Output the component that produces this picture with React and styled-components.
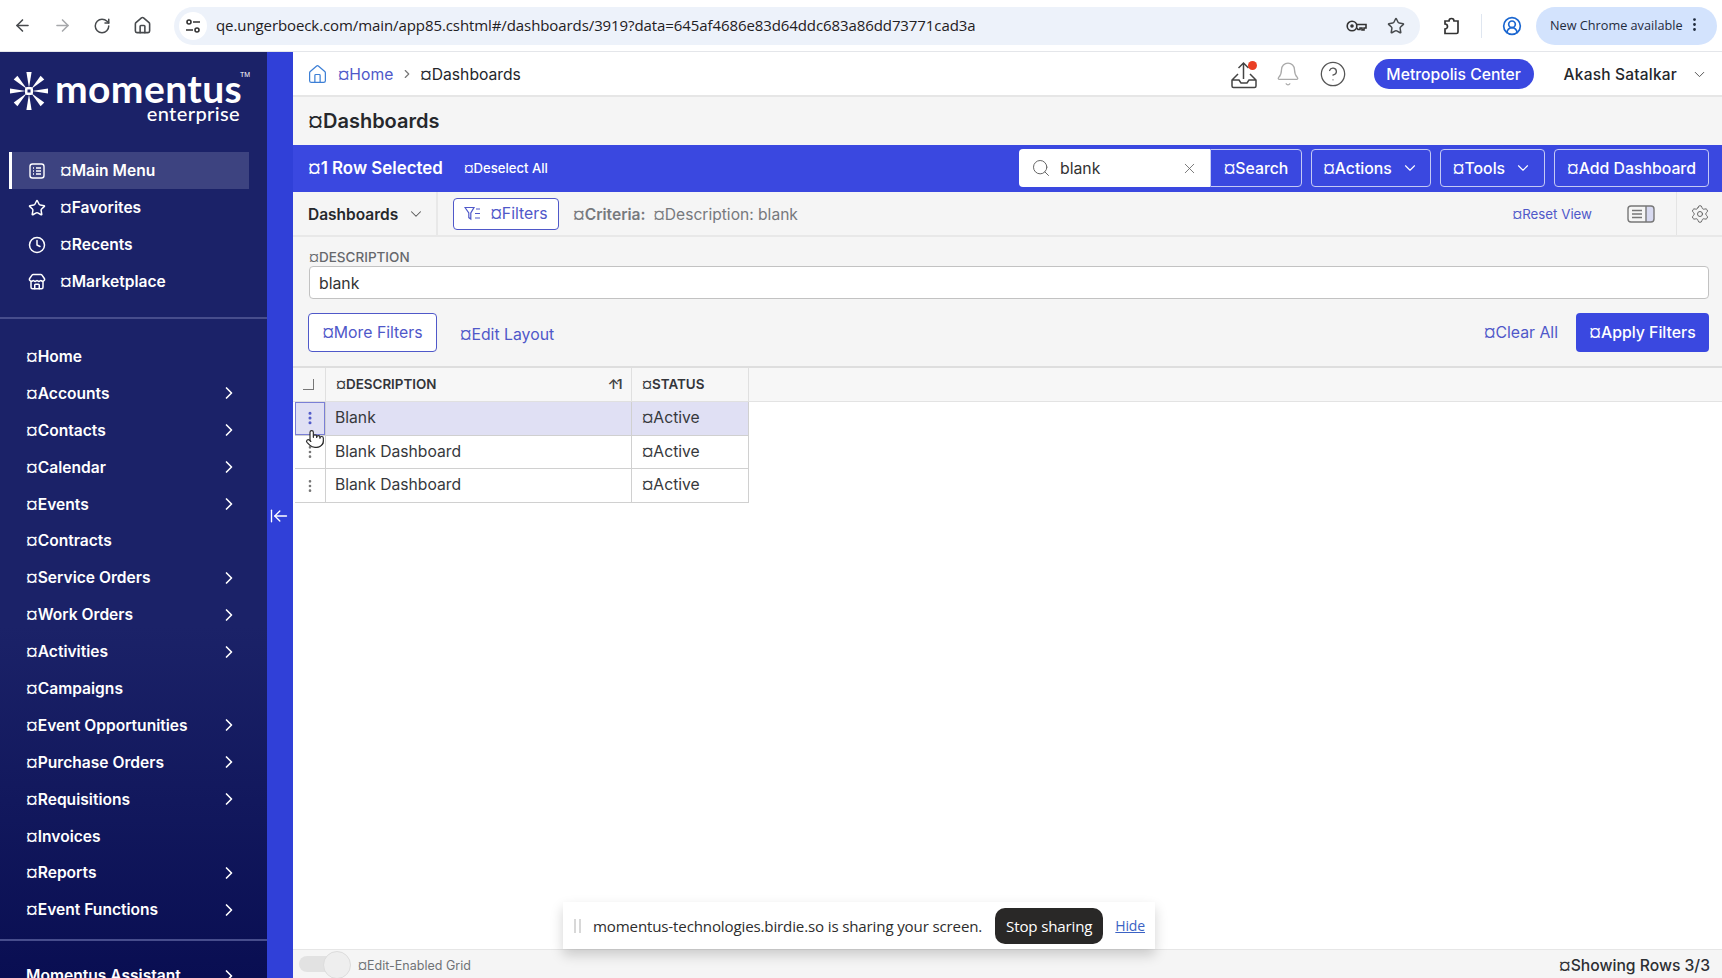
import React from 'react';
import styled, { createGlobalStyle } from 'styled-components';
import {
  ArrowLeft,
  ArrowLeftToLine,
  ArrowRight,
  Bell,
  ChevronDown,
  ChevronRight,
  CircleHelp,
  CircleUserRound,
  Clock,
  EllipsisVertical,
  Home as HomeIcon,
  House,
  Pointer,
  RotateCw,
  Search as SearchIcon,
  Settings,
  Star,
  Store,
  X,
} from 'lucide-react';

const BLUE = '#3a48e0';
const LINK = '#4f58c9';

const GlobalStyle = createGlobalStyle`
  html, body {
    margin: 0;
    height: 100%;
    overflow: hidden;
    font-family: Inter, "Liberation Sans", sans-serif;
    background: #fff;
  }
  * { box-sizing: border-box; }
`;

const Page = styled.div`
  width: 1722px;
  height: 978px;
  display: flex;
  flex-direction: column;
  overflow: hidden;
  position: relative;
`;

/* browser chrome */
const Chrome = styled.div`
  height: 52px;
  flex: none;
  display: flex;
  align-items: center;
  padding: 0 5px 0 2px;
  background: #fff;
  border-bottom: 1px solid #e4e6ea;
`;

const ChromeBtn = styled.div`
  width: 40px;
  height: 40px;
  flex: none;
  display: flex;
  align-items: center;
  justify-content: center;
  color: ${p => p.$color || '#474a4d'};
`;

const Address = styled.div`
  width: 1246px;
  height: 38px;
  margin: 0 12px 0 12px;
  padding: 0 4px 0 5px;
  display: flex;
  align-items: center;
  border-radius: 19px;
  background: #edf2fa;
  color: #1f2023;
`;

const SiteIcon = styled.div`
  width: 28px;
  height: 28px;
  margin-right: 9px;
  border-radius: 50%;
  background: #fff;
  display: flex;
  align-items: center;
  justify-content: center;
`;

const Url = styled.div`
  flex: 1;
  padding-bottom: 2px;
  font: 15px "Open Sans", sans-serif;
  letter-spacing: -0.09px;
  white-space: nowrap;
`;

const UpdatePill = styled.div`
  width: 181px;
  height: 38px;
  margin-left: 4px;
  padding: 0 0 2px 14px;
  display: flex;
  align-items: center;
  gap: 3px;
  border-radius: 19px;
  background: #d3e3fd;
  color: #1f2b3d;
  font: 12.7px "Open Sans", sans-serif;
  white-space: nowrap;
`;

const ChromeDivider = styled.div`
  width: 1px;
  height: 24px;
  margin: 0 10px 0 9px;
  background: #dfe6f0;
`;

const Body = styled.div`
  flex: 1;
  min-height: 0;
  display: flex;
`;

/* left navigation */
const Sidebar = styled.aside`
  width: 267px;
  flex: none;
  height: 100%;
  overflow: hidden;
  background: linear-gradient(180deg, #1b2268 0%, #1b2268 62%, #090e52 100%);
  color: #fff;
`;

const Logo = styled.div`
  height: 100px;
  padding: 20px 0 0 10px;
  display: flex;
  align-items: flex-start;
  gap: 7px;
`;

const LogoWords = styled.div`
  display: flex;
  flex-direction: column;
  align-items: flex-end;
  position: relative;
  padding-right: 8px;
`;

const LogoName = styled.div`
  font: 700 39px/33px Lato, sans-serif;
  letter-spacing: 0.4px;
`;

const LogoSub = styled.div`
  font: 500 20px/17px Lato, sans-serif;
  letter-spacing: 0.4px;
  margin-right: 2px;
`;

const LogoTm = styled.span`
  position: absolute;
  top: -1px;
  right: 0;
  font: 7px "Liberation Sans", sans-serif;
`;

const TopNav = styled.nav`
  padding-bottom: 17px;
  border-bottom: 2px solid #474d8c;
`;

const TopItem = styled.div`
  height: 37px;
  margin-right: 18px;
  margin-left: 9px;
  padding-left: 16px;
  display: flex;
  align-items: center;
  gap: 14px;
  font-size: 15.6px;
  font-weight: 600;
  border-left: 3px solid ${p => (p.$active ? '#fff' : 'transparent')};
  background: ${p => (p.$active ? '#3d4380' : 'transparent')};
`;

const MainNav = styled.nav`
  padding: 19px 0 11px;
  border-bottom: 2px solid #474d8c;
`;

const NavItem = styled.div`
  height: 36.9px;
  padding: 0 28px 0 26px;
  display: flex;
  align-items: center;
  justify-content: space-between;
  font-size: 15.6px;
  font-weight: 600;
  white-space: nowrap;
`;

const AssistantItem = styled(NavItem)`
  margin-top: 16px;
`;

const Strip = styled.div`
  width: 26px;
  flex: none;
  background: #3040d8;
`;

const Collapse = styled.div`
  position: absolute;
  left: 269px;
  top: 506px;
  color: #fff;
  display: flex;
`;

/* main column */
const Main = styled.main`
  flex: 1;
  min-width: 0;
  display: flex;
  flex-direction: column;
  background: #fff;
`;

const Header = styled.header`
  height: 45px;
  flex: none;
  display: flex;
  align-items: center;
  padding: 1px 14px 0;
  border-bottom: 2px solid #e6e6e6;
  font-size: 15.7px;
  color: #24262b;
`;

const Crumb = styled.span`
  display: flex;
  margin-left: ${p => p.$gap || 0}px;
  color: ${p => p.$color || 'inherit'};
  white-space: nowrap;
`;

const HeaderRight = styled.div`
  margin-left: auto;
  display: flex;
  align-items: center;
`;

const HeaderIcon = styled.div`
  position: relative;
  width: 30px;
  height: 30px;
  margin-left: ${p => p.$gap ?? 15}px;
  display: flex;
  align-items: center;
  justify-content: center;
  color: ${p => p.$color || '#444'};
`;

const RedDot = styled.span`
  position: absolute;
  top: 2px;
  right: 2px;
  width: 9px;
  height: 9px;
  border-radius: 50%;
  background: #ea3f25;
`;

const VenuePill = styled.div`
  margin-left: 26px;
  width: 160px;
  height: 30px;
  border-radius: 15px;
  background: ${BLUE};
  color: #fff;
  display: flex;
  align-items: center;
  justify-content: center;
  font-size: 15.7px;
  font-weight: 500;
`;

const UserName = styled.div`
  margin-left: 30px;
  font-size: 15.5px;
  font-weight: 500;
  white-space: nowrap;
  letter-spacing: 0.2px;
`;

const UserChevron = styled.div`
  margin-left: 14px;
  display: flex;
  color: #555;
`;

const TitleBar = styled.div`
  height: 48px;
  flex: none;
  padding: 0 15px;
  display: flex;
  align-items: center;
  background: #f5f5f5;
  font-size: 20px;
  font-weight: 600;
  color: #26282c;
`;

const ActionBar = styled.div`
  height: 47px;
  flex: none;
  padding: 0 13px 1px 15px;
  display: flex;
  align-items: center;
  background: ${BLUE};
  color: #fff;
`;

const SelectedCount = styled.div`
  font-size: 16.9px;
  font-weight: 600;
  white-space: nowrap;
`;

const Deselect = styled.div`
  margin-left: 21px;
  font-size: 13.1px;
  font-weight: 500;
  white-space: nowrap;
`;

const SearchBox = styled.div`
  margin-left: auto;
  width: 191px;
  height: 38px;
  padding: 0 12px;
  display: flex;
  align-items: center;
  border-radius: 4px 0 0 4px;
  background: #fff;
  color: #333;
  font-size: 15.8px;
`;

const SearchText = styled.span`
  flex: 1;
  margin-left: 9px;
`;

const BarButton = styled.div`
  height: 38px;
  width: ${p => p.$w}px;
  margin-left: ${p => p.$gap ?? 9}px;
  display: flex;
  align-items: center;
  justify-content: center;
  gap: 9px;
  border: 1px solid #c4c9f5;
  border-radius: ${p => p.$radius || '4px'};
  font-size: 15.8px;
  font-weight: 500;
  white-space: nowrap;
`;

const ViewBar = styled.div`
  height: 45px;
  flex: none;
  display: flex;
  align-items: center;
  padding-right: 12px;
  background: #f5f5f5;
  border-bottom: 2px solid #e8e8e8;
`;

const ViewSelect = styled.div`
  width: 145px;
  height: 100%;
  padding: 1px 0 0 15px;
  display: flex;
  align-items: center;
  gap: 9px;
  border-right: 2px solid #e8e8e8;
  font-size: 15.5px;
  font-weight: 600;
  color: #26282c;
`;

const OutlineButton = styled.div`
  display: flex;
  align-items: center;
  justify-content: center;
  gap: 9px;
  width: ${p => p.$w}px;
  height: ${p => p.$h}px;
  margin-left: ${p => p.$gap || 0}px;
  background: #fff;
  border: 1px solid ${LINK};
  border-radius: 4px;
  color: ${LINK};
  font-size: 15.8px;
  white-space: nowrap;
`;

const Criteria = styled.div`
  margin: 2px 0 0 14px;
  color: #77797d;
  font-size: 15.6px;
  white-space: nowrap;
`;

const CriteriaLabel = styled.span`
  font-weight: 600;
  margin-right: 8px;
`;

const LinkText = styled.div`
  color: ${LINK};
  font-size: ${p => p.$size || 15.8}px;
  margin-left: ${p => p.$left || 0};
  margin-top: ${p => p.$top || 0}px;
  white-space: nowrap;
`;

const ViewRight = styled.div`
  margin-left: auto;
  height: 100%;
  display: flex;
  align-items: center;
`;

const ViewDivider = styled.div`
  width: 1px;
  height: 100%;
  margin: 0 13px 0 21px;
  background: #e4e4e4;
`;

const FilterPanel = styled.section`
  height: 131px;
  flex: none;
  padding: 12px 13px 0 15px;
  background: #f5f5f5;
  border-bottom: 2px solid #dedede;
`;

const FieldLabel = styled.div`
  margin-left: 1px;
  font-size: 13.5px;
  line-height: 16px;
  font-weight: 500;
  color: #66686c;
`;

const FieldInput = styled.div`
  height: 33px;
  margin: 1px 0 14px 1px;
  padding: 1px 9px 0;
  display: flex;
  align-items: center;
  background: #fff;
  border: 1px solid #c2c2c2;
  border-radius: 4px;
  font-size: 15.8px;
  color: #333;
`;

const FilterActions = styled.div`
  display: flex;
  align-items: center;
`;

const ApplyButton = styled.div`
  width: 133px;
  height: 39px;
  margin-left: 18px;
  display: flex;
  align-items: center;
  justify-content: center;
  border-radius: 4px;
  background: ${BLUE};
  color: #fff;
  font-size: 15.8px;
  font-weight: 500;
  white-space: nowrap;
`;

/* grid */
const GridArea = styled.div`
  flex: 1;
  min-height: 0;
  position: relative;
`;

const HeadStrip = styled.div`
  height: 34px;
  background: #f7f7f7;
  border-bottom: 1px solid #e3e3e3;
`;

const Table = styled.div`
  position: absolute;
  top: 0;
  left: 2px;
  width: 454px;
  display: grid;
  grid-template-columns: 31px 306px 117px;
  grid-template-rows: 34px repeat(3, 33.7px);
`;

const Cell = styled.div`
  display: flex;
  align-items: center;
  justify-content: ${p => (p.$center ? 'center' : 'flex-start')};
  padding: ${p => (p.$center ? '0' : '0 9px 2px')};
  border-right: 1px solid #d0d0d0;
  border-bottom: 1px solid #d0d0d0;
  background: ${p => (p.$selected ? '#e0e0f4' : '#fff')};
  color: #36383c;
  font-size: 15.7px;
  white-space: nowrap;
`;

const StatusCell = styled(Cell)`
  padding-left: 10px;
`;

const HeadCell = styled(Cell)`
  padding-left: ${p => (p.$center ? 0 : 10)}px;
  justify-content: ${p => (p.$center ? 'center' : 'space-between')};
  background: #f7f7f7;
  border-color: #e0e0e0;
  font-size: 13.4px;
  font-weight: 600;
  color: #33353a;
`;

const SelectCorner = styled.div`
  width: 11px;
  height: 11px;
  margin-left: -3px;
  border-right: 1.5px solid #777;
  border-bottom: 1.5px solid #777;
`;

const RowMenu = styled(Cell)`
  color: ${p => (p.$selected ? LINK : '#777')};
  ${p => p.$selected && `box-shadow: inset 0 0 0 1px #7a7fd6;`}
`;

const SortMark = styled.span`
  font-size: 13.5px;
  font-weight: 600;
  letter-spacing: -2.5px;
  color: #444;
  padding-right: 2px;
`;

const Hand = styled.div`
  position: absolute;
  left: 12px;
  top: 61px;
  display: flex;
  color: #2a2a2a;
`;

/* footer */
const Footer = styled.footer`
  height: 29px;
  flex: none;
  padding: 0 12px 0 6px;
  display: flex;
  align-items: center;
  background: #f5f5f5;
  border-top: 1px solid #e6e6e6;
`;

const Toggle = styled.div`
  width: 52px;
  height: 26px;
  flex: none;
  position: relative;
  &::before {
    content: '';
    position: absolute;
    left: 0;
    top: 5px;
    width: 40px;
    height: 16px;
    border-radius: 8px;
    background: #e2e2e2;
  }
  &::after {
    content: '';
    position: absolute;
    right: 0;
    top: 0;
    width: 26px;
    height: 26px;
    border-radius: 50%;
    background: #eee;
    border: 1px solid #dcdcdc;
  }
`;

const ToggleLabel = styled.div`
  margin: 2px 0 0 7px;
  font-size: 12.5px;
  color: #707275;
`;

const RowCount = styled.div`
  margin: 2px 0 0 auto;
  font-size: 15.7px;
  font-weight: 500;
  color: #2d2f33;
`;

/* screen share notice */
const ShareBar = styled.div`
  position: absolute;
  left: 563px;
  top: 902px;
  width: 592px;
  height: 47px;
  padding: 0 10px 0 11px;
  display: flex;
  align-items: center;
  background: #fff;
  box-shadow: 0 6px 12px rgba(0, 0, 0, 0.18);
  font: 15.1px "Open Sans", sans-serif;
  letter-spacing: -0.15px;
  color: #2d2d2d;
  white-space: nowrap;
`;

const Grip = styled.div`
  width: 7px;
  height: 14px;
  margin-right: 12px;
  border-left: 2px solid #d8d8d8;
  border-right: 2px solid #d8d8d8;
`;

const StopButton = styled.div`
  margin-left: 13px;
  width: 109px;
  height: 36px;
  display: flex;
  align-items: center;
  justify-content: center;
  border-radius: 10px;
  background: #292827;
  color: #fff;
`;

const HideLink = styled.div`
  margin-left: 12px;
  color: #3b62c4;
  font-size: 14px;
  text-decoration: underline;
`;

const topItems = [
  { label: 'Main Menu', icon: ListIcon, active: true },
  { label: 'Favorites', icon: Star },
  { label: 'Recents', icon: Clock },
  { label: 'Marketplace', icon: Store },
];

const navItems = [
  ['Home', false],
  ['Accounts', true],
  ['Contacts', true],
  ['Calendar', true],
  ['Events', true],
  ['Contracts', false],
  ['Service Orders', true],
  ['Work Orders', true],
  ['Activities', true],
  ['Campaigns', false],
  ['Event Opportunities', true],
  ['Purchase Orders', true],
  ['Requisitions', true],
  ['Invoices', false],
  ['Reports', true],
  ['Event Functions', true],
];

const rows = [
  { name: 'Blank', selected: true },
  { name: 'Blank Dashboard' },
  { name: 'Blank Dashboard' },
];

function ListIcon(props) {
  return (
    <svg width={props.size} height={props.size} viewBox="0 0 18 18" fill="none" stroke="currentColor" strokeWidth="1.4">
      <rect x="2" y="2" width="14" height="14" rx="2.5" />
      <path d="M5 6h1M8 6h5M5 9h1M8 9h5M5 12h1M8 12h5" />
    </svg>
  );
}

const LogoMark = () => (
  <svg width="38" height="40" viewBox="0 0 38 40" fill="#fff" style={{ marginTop: -1 }}>
    {[0, 45, 90, 135, 180, 225, 270, 315].map(a => (
      <polygon key={a} points="19,17 16.4,1 21.6,1" transform={`rotate(${a} 19 20)`} />
    ))}
    <rect x="15" y="16" width="8" height="8" rx="2" />
    <rect x="17.5" y="18.5" width="3" height="3" fill="#1b2268" />
  </svg>
);

const UploadTray = () => (
  <svg width="28" height="30" viewBox="0 0 28 30" fill="none" stroke="#444" strokeWidth="1.5">
    <path d="M13.5 20V4M8.5 9l5-5 5 5" />
    <path d="M8 15l-6 6v6a1.5 1.5 0 0 0 1.5 1.5h21a1.5 1.5 0 0 0 1.5-1.5v-6l-6-6M2 21h7l2 3h6l2-3h7" />
  </svg>
);

const FilterIcon = () => (
  <svg width="17" height="15" viewBox="0 0 17 15" fill="none" stroke={LINK} strokeWidth="1.2">
    <path d="M1 1.5h9L6.8 7v6l-2-1.4V7zM12 3h4M11 7.5h5M11 12h5" />
  </svg>
);

const PanelIcon = () => (
  <svg width="28" height="18" viewBox="0 0 28 18" fill="none" stroke="#777" strokeWidth="1.4" style={{ marginLeft: 35 }}>
    <path d="M19 1h5.5a2.5 2.5 0 0 1 2.5 2.5v11a2.5 2.5 0 0 1-2.5 2.5H19z" fill="#d8daf0" stroke="none" />
    <rect x="1" y="1" width="26" height="16" rx="3" />
    <path d="M19 1v16M5 5.5h10M5 9h10M5 12.5h10" />
  </svg>
);

const SiteControls = () => (
  <svg width="16" height="16" viewBox="0 0 16 16" fill="none" stroke="#333" strokeWidth="1.6">
    <circle cx="4" cy="4" r="2" />
    <path d="M8 4h7M1 12h7" />
    <circle cx="12" cy="12" r="2" />
  </svg>
);

const KeyIcon = () => (
  <svg width="21" height="14" viewBox="0 0 21 14" fill="none" stroke="#333" strokeWidth="1.6">
    <circle cx="6" cy="7" r="4.8" />
    <circle cx="6" cy="7" r="1" fill="#333" />
    <path d="M10.8 5.5H20V9h-2v2h-2V9h-2v1.5h-2L10.8 9" />
  </svg>
);

const ExtensionIcon = () => (
  <svg width="20" height="20" viewBox="0 0 20 20" fill="none" stroke="#333" strokeWidth="1.7">
    <path d="M3 5h4a2.5 2.5 0 0 1 5 0h4v11a1.5 1.5 0 0 1-1.5 1.5H3v-4.5a2.5 2.5 0 0 0 0-5z" />
  </svg>
);

const App = () => (
  <Page>
    <GlobalStyle />
    <Chrome>
      <ChromeBtn><ArrowLeft size={19} /></ChromeBtn>
      <ChromeBtn $color="#a6a8ab"><ArrowRight size={19} /></ChromeBtn>
      <ChromeBtn><RotateCw size={18} /></ChromeBtn>
      <ChromeBtn><HomeIcon size={19} /></ChromeBtn>
      <Address>
        <SiteIcon><SiteControls /></SiteIcon>
        <Url>qe.ungerboeck.com/main/app85.cshtml#/dashboards/3919?data=645af4686e83d64ddc683a86dd73771cad3a</Url>
        <ChromeBtn><KeyIcon /></ChromeBtn>
        <ChromeBtn><Star size={18} /></ChromeBtn>
      </Address>
      <ChromeBtn><ExtensionIcon /></ChromeBtn>
      <ChromeDivider />
      <ChromeBtn $color="#1a66d0"><CircleUserRound size={20} /></ChromeBtn>
      <UpdatePill>
        New Chrome available
        <EllipsisVertical size={17} />
      </UpdatePill>
    </Chrome>
    <Body>
      <Sidebar>
        <Logo>
          <LogoMark />
          <LogoWords>
            <LogoName>momentus</LogoName>
            <LogoSub>enterprise</LogoSub>
            <LogoTm>TM</LogoTm>
          </LogoWords>
        </Logo>
        <TopNav>
          {topItems.map(({ label, icon: Icon, active }) => (
            <TopItem key={label} $active={active}>
              <Icon size={18} />
              <span>¤{label}</span>
            </TopItem>
          ))}
        </TopNav>
        <MainNav>
          {navItems.map(([label, more]) => (
            <NavItem key={label}>
              <span>¤{label}</span>
              {more && <ChevronRight size={20} />}
            </NavItem>
          ))}
        </MainNav>
        <AssistantItem>
          <span>Momentus Assistant</span>
          <ChevronRight size={20} />
        </AssistantItem>
      </Sidebar>
      <Strip />
      <Collapse><ArrowLeftToLine size={20} strokeWidth={1.6} /></Collapse>
      <Main>
        <Header>
          <House size={21} color="#3c7fd6" strokeWidth={1.4} />
          <Crumb $gap={10} $color={LINK}>¤Home</Crumb>
          <Crumb $gap={7}><ChevronRight size={14} color="#777" /></Crumb>
          <Crumb $gap={6}>¤Dashboards</Crumb>
          <HeaderRight>
            <HeaderIcon><UploadTray /><RedDot /></HeaderIcon>
            <HeaderIcon $color="#aaa" $gap={14}><Bell size={26} strokeWidth={1.2} /></HeaderIcon>
            <HeaderIcon $color="#555"><CircleHelp size={28} strokeWidth={1.1} /></HeaderIcon>
            <VenuePill>Metropolis Center</VenuePill>
            <UserName>Akash Satalkar</UserName>
            <UserChevron><ChevronDown size={17} strokeWidth={1.4} /></UserChevron>
          </HeaderRight>
        </Header>
        <TitleBar>¤Dashboards</TitleBar>
        <ActionBar>
          <SelectedCount>¤1 Row Selected</SelectedCount>
          <Deselect>¤Deselect All</Deselect>
          <SearchBox>
            <SearchIcon size={20} strokeWidth={1.2} color="#666" />
            <SearchText>blank</SearchText>
            <X size={17} strokeWidth={1.2} color="#666" />
          </SearchBox>
          <BarButton $w={92} $gap={0} $radius="0 4px 4px 0">¤Search</BarButton>
          <BarButton $w={120}>¤Actions <ChevronDown size={18} strokeWidth={1.5} /></BarButton>
          <BarButton $w={105}>¤Tools <ChevronDown size={18} strokeWidth={1.5} /></BarButton>
          <BarButton $w={155}>¤Add Dashboard</BarButton>
        </ActionBar>
        <ViewBar>
          <ViewSelect>Dashboards <ChevronDown size={18} strokeWidth={1.4} color="#555" /></ViewSelect>
          <OutlineButton $w={106} $h={32} $gap={15}><FilterIcon />¤Filters</OutlineButton>
          <Criteria><CriteriaLabel>¤Criteria:</CriteriaLabel>¤Description: blank</Criteria>
          <ViewRight>
            <LinkText $size={13.3}>¤Reset View</LinkText>
            <PanelIcon />
            <ViewDivider />
            <Settings size={20} strokeWidth={1.2} color="#666" />
          </ViewRight>
        </ViewBar>
        <FilterPanel>
          <FieldLabel>¤DESCRIPTION</FieldLabel>
          <FieldInput>blank</FieldInput>
          <FilterActions>
            <OutlineButton $w={129} $h={39}>¤More Filters</OutlineButton>
            <LinkText $left="23px" $top={3}>¤Edit Layout</LinkText>
            <LinkText $left="auto">¤Clear All</LinkText>
            <ApplyButton>¤Apply Filters</ApplyButton>
          </FilterActions>
        </FilterPanel>
        <GridArea>
          <HeadStrip />
          <Table>
            <HeadCell $center><SelectCorner /></HeadCell>
            <HeadCell>¤DESCRIPTION<SortMark>↑1</SortMark></HeadCell>
            <HeadCell>¤STATUS</HeadCell>
            {rows.map((row, i) => (
              <React.Fragment key={i}>
                <RowMenu $center $selected={row.selected}>
                  <EllipsisVertical size={16} strokeWidth={row.selected ? 2.6 : 2} />
                </RowMenu>
                <Cell $selected={row.selected}>{row.name}</Cell>
                <StatusCell $selected={row.selected}>¤Active</StatusCell>
              </React.Fragment>
            ))}
          </Table>
          <Hand><Pointer size={20} strokeWidth={1.4} fill="#fff" /></Hand>
        </GridArea>
        <Footer>
          <Toggle />
          <ToggleLabel>¤Edit-Enabled Grid</ToggleLabel>
          <RowCount>¤Showing Rows 3/3</RowCount>
        </Footer>
      </Main>
    </Body>
    <ShareBar>
      <Grip />
      momentus-technologies.birdie.so is sharing your screen.
      <StopButton>Stop sharing</StopButton>
      <HideLink>Hide</HideLink>
    </ShareBar>
  </Page>
);

export default App;
